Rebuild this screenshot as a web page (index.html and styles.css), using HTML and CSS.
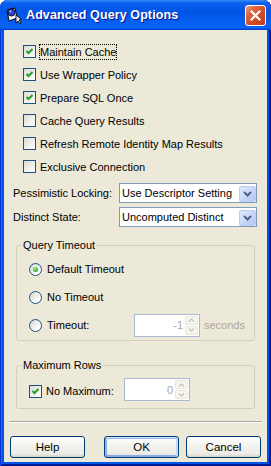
FILE: index.html
```html
<!DOCTYPE html>
<html lang="en">
<head>
    <meta charset="UTF-8">
    <meta name="viewport" content="width=device-width, initial-scale=1.0">
    <title>Advanced Query Options</title>
    <link rel="stylesheet" href="styles.css">
</head>
<body>
    <div class="window">
        <div class="titlebar">
            <svg class="app-icon" width="17" height="17" viewBox="0 0 17 17">
                <path d="M2 3 L10 1 L12 11 L4 14 Z" fill="#fff" stroke="#000" stroke-width="1"/>
                <circle cx="6.5" cy="5.5" r="3.6" fill="#2a3fd8" stroke="#000" stroke-width="0.8"/>
                <circle cx="5.4" cy="4.4" r="1.1" fill="#9fb4ff"/>
                <path d="M11 8 L11 16 L13 14 L15 17 L16 16 L14 13 L16.5 12.5 Z" fill="#fff" stroke="#000" stroke-width="0.9"/>
            </svg>
            <span class="title">Advanced Query Options</span>
            <button class="close">
                <svg width="11" height="11" viewBox="0 0 11 11">
                    <path d="M1.5 1.5 L9.5 9.5 M9.5 1.5 L1.5 9.5" stroke="#fff" stroke-width="2.2" stroke-linecap="square"/>
                </svg>
            </button>
        </div>

        <div class="client">
            <div class="checks">
                <label class="check-row">
                    <span class="cb checked"><svg width="11" height="11" viewBox="0 0 11 11"><path d="M2.5 5 L4.5 7 L8.5 3" fill="none" stroke="#21a121" stroke-width="2"/></svg></span>
                    <span class="text focus">Maintain Cache</span>
                </label>
                <label class="check-row">
                    <span class="cb checked"><svg width="11" height="11" viewBox="0 0 11 11"><path d="M2.5 5 L4.5 7 L8.5 3" fill="none" stroke="#21a121" stroke-width="2"/></svg></span>
                    <span class="text">Use Wrapper Policy</span>
                </label>
                <label class="check-row">
                    <span class="cb checked"><svg width="11" height="11" viewBox="0 0 11 11"><path d="M2.5 5 L4.5 7 L8.5 3" fill="none" stroke="#21a121" stroke-width="2"/></svg></span>
                    <span class="text">Prepare SQL Once</span>
                </label>
                <label class="check-row">
                    <span class="cb"></span>
                    <span class="text">Cache Query Results</span>
                </label>
                <label class="check-row">
                    <span class="cb"></span>
                    <span class="text">Refresh Remote Identity Map Results</span>
                </label>
                <label class="check-row">
                    <span class="cb"></span>
                    <span class="text">Exclusive Connection</span>
                </label>
            </div>

            <div class="field-row first">
                <span class="field-label">Pessimistic Locking:</span>
                <div class="combo">
                    <span class="combo-value">Use Descriptor Setting</span>
                    <span class="drop"><svg width="9" height="6" viewBox="0 0 9 6"><path d="M1 1 L4.5 4.5 L8 1" fill="none" stroke="#4d6185" stroke-width="2"/></svg></span>
                </div>
            </div>
            <div class="field-row">
                <span class="field-label">Distinct State:</span>
                <div class="combo">
                    <span class="combo-value">Uncomputed Distinct</span>
                    <span class="drop"><svg width="9" height="6" viewBox="0 0 9 6"><path d="M1 1 L4.5 4.5 L8 1" fill="none" stroke="#4d6185" stroke-width="2"/></svg></span>
                </div>
            </div>

            <div class="group timeout">
                <span class="legend">Query Timeout</span>
                <label class="radio-row">
                    <span class="radio selected"></span>
                    <span class="text">Default Timeout</span>
                </label>
                <label class="radio-row">
                    <span class="radio"></span>
                    <span class="text">No Timeout</span>
                </label>
                <div class="radio-row">
                    <span class="radio"></span>
                    <span class="text timeout-label">Timeout:</span>
                    <div class="spinner">
                        <span class="spin-value">-1</span>
                        <span class="spin-buttons">
                            <span class="spin-btn"><svg width="7" height="4" viewBox="0 0 7 4"><path d="M1 3.5 L3.5 1 L6 3.5" fill="none" stroke="#c9c7ba" stroke-width="1.4"/></svg></span>
                            <span class="spin-btn"><svg width="7" height="4" viewBox="0 0 7 4"><path d="M1 0.5 L3.5 3 L6 0.5" fill="none" stroke="#c9c7ba" stroke-width="1.4"/></svg></span>
                        </span>
                    </div>
                    <span class="disabled-text">seconds</span>
                </div>
            </div>

            <div class="group maxrows">
                <span class="legend">Maximum Rows</span>
                <div class="nomax-row">
                    <label class="nomax-check">
                        <span class="cb checked"><svg width="11" height="11" viewBox="0 0 11 11"><path d="M2.5 5 L4.5 7 L8.5 3" fill="none" stroke="#21a121" stroke-width="2"/></svg></span>
                        <span class="text nomax-label">No Maximum:</span>
                    </label>
                    <div class="spinner">
                        <span class="spin-value">0</span>
                        <span class="spin-buttons">
                            <span class="spin-btn"><svg width="7" height="4" viewBox="0 0 7 4"><path d="M1 3.5 L3.5 1 L6 3.5" fill="none" stroke="#c9c7ba" stroke-width="1.4"/></svg></span>
                            <span class="spin-btn"><svg width="7" height="4" viewBox="0 0 7 4"><path d="M1 0.5 L3.5 3 L6 0.5" fill="none" stroke="#c9c7ba" stroke-width="1.4"/></svg></span>
                        </span>
                    </div>
                </div>
            </div>

            <div class="separator"></div>

            <div class="buttons">
                <button class="btn help">Help</button>
                <button class="btn default">OK</button>
                <button class="btn">Cancel</button>
            </div>
        </div>
    </div>
</body>
</html>
```

FILE: styles.css
```css
body {
    margin: 0;
    background: #fff;
    font-family: "Liberation Sans", Arial, sans-serif;
    font-size: 11px;
    color: #000;
}
.window {
    width: 271px;
    height: 466px;
    display: flex;
    flex-direction: column;
    background: #0055e5;
    border-radius: 8px 8px 0 0;
    overflow: hidden;
    box-shadow: inset 1px 0 #0831d9, inset -1px 0 #00138c, inset 0 -1px #00138c, inset 2px 0 #166aee, inset -2px 0 #001ea0, inset 0 -2px #001ea0;
}
.titlebar {
    height: 30px;
    flex-shrink: 0;
    display: flex;
    align-items: center;
    padding: 0 5px 0 5px;
    background: linear-gradient(180deg, #3b8cf6, #0a5fef 10%, #0055e5 40%, #0862f5 85%, #0a63f7 92%, #0048d5 97%, #003dd7);
}
.app-icon {
    flex-shrink: 0;
    margin-top: 1px;
}
.title {
    margin-left: 4px;
    flex: 1;
    color: #fff;
    font-weight: bold;
    font-size: 12.5px;
    letter-spacing: 0.1px;
    text-shadow: 1px 1px #0f1089;
}
.close {
    width: 21px;
    height: 21px;
    padding: 0;
    display: flex;
    align-items: center;
    justify-content: center;
    border: 1px solid #fff;
    border-radius: 3px;
    background: linear-gradient(135deg, #f0a080 0%, #e06a45 25%, #d24a25 60%, #c23a18 100%);
}
.client {
    flex: 1;
    margin: 0 4px 4px;
    background: #ece9d8;
}
.checks {
    padding: 10px 0 0 19px;
}
.check-row {
    display: flex;
    align-items: center;
    gap: 3px;
    height: 23px;
    white-space: nowrap;
}
.text {
    padding: 1px;
    line-height: 14px;
    white-space: nowrap;
}
.focus {
    outline: 1px dotted #000;
    outline-offset: -1px;
}
.cb {
    width: 11px;
    height: 11px;
    flex-shrink: 0;
    border: 1px solid #1c5180;
    background: linear-gradient(135deg, #dcdcd7, #ffffff);
    display: flex;
}
.field-row {
    display: flex;
    align-items: center;
    height: 20px;
    padding-left: 9px;
    margin-top: 4px;
}
.field-row.first {
    margin-top: 5px;
}
.field-label {
    width: 106px;
}
.combo {
    width: 136px;
    height: 18px;
    border: 1px solid #7f9db9;
    background: #fff;
    display: flex;
    align-items: center;
}
.combo-value {
    flex: 1;
    padding-left: 2px;
    white-space: nowrap;
    overflow: hidden;
}
.drop {
    width: 15px;
    height: 14px;
    flex-shrink: 0;
    margin: 1px 0 0 0;
    border: 1px solid #bccdf3;
    border-radius: 2px;
    background: linear-gradient(135deg, #e1eafe, #c2d4fa 60%, #b4c8f6);
    display: flex;
    align-items: center;
    justify-content: center;
}
.group {
    position: relative;
    margin: 0 12px;
    border: 1px solid #d0d0bf;
    border-radius: 3px;
}
.legend {
    position: absolute;
    top: -8px;
    left: 5px;
    padding: 0 1px;
    background: #ece9d8;
    line-height: 14px;
}
.timeout {
    margin-top: 18px;
    padding: 9px 0 1px 12px;
}
.radio-row {
    display: flex;
    align-items: center;
    gap: 4px;
    height: 28px;
}
.radio {
    width: 11px;
    height: 11px;
    flex-shrink: 0;
    border: 1px solid #1c5180;
    border-radius: 50%;
    background: linear-gradient(135deg, #d6d6ce, #ffffff 80%);
    display: flex;
    align-items: center;
    justify-content: center;
}
.radio.selected::after {
    content: "";
    width: 5px;
    height: 5px;
    border-radius: 50%;
    background: radial-gradient(circle at 40% 35%, #a4f5a4, #3cbc3c 55%, #1a8f1a);
}
.timeout-label {
    width: 82px;
}
.spinner {
    width: 64px;
    height: 21px;
    border: 1px solid #a8b9d1;
    background: #fff;
    display: flex;
    align-items: center;
}
.spin-value {
    flex: 1;
    text-align: right;
    padding-right: 2px;
    color: #aca899;
}
.spin-buttons {
    width: 13px;
    height: 19px;
    margin-right: 1px;
    display: flex;
    flex-direction: column;
    gap: 1px;
}
.spin-btn {
    flex: 1;
    border: 1px solid #e8e6dd;
    border-radius: 2px;
    background: #f6f5ee;
    display: flex;
    align-items: center;
    justify-content: center;
}
.disabled-text {
    color: #aca899;
}
.maxrows {
    margin-top: 24px;
    padding: 12px 0 7px 12px;
}
.nomax-row {
    display: flex;
    align-items: flex-end;
    height: 23px;
}
.nomax-check {
    display: flex;
    align-items: center;
    gap: 3px;
    margin-bottom: 2px;
}
.nomax-label {
    width: 77px;
}
.separator {
    margin: 12px 5px 0;
    border-top: 1px solid #aca899;
    border-bottom: 1px solid #fff;
}
.buttons {
    display: flex;
    padding-left: 6px;
    margin-top: 13px;
    gap: 7px;
}
.btn {
    width: 75px;
    height: 22px;
    padding: 0;
    font-family: "Liberation Sans", Arial, sans-serif;
    font-size: 11.5px;
    color: #000;
    border: 1px solid #003c74;
    border-radius: 3px;
    background: linear-gradient(180deg, #ffffff, #f4f4f0 40%, #ecebe6 85%, #d6d0c5);
}
.btn.help {
    margin-right: 12px;
}
.btn.default {
    box-shadow: inset -1px 1px #cee7ff, inset 1px 2px #98b8ea, inset -2px 0 #bcd4f6, inset 1px -1px #89ade4, inset 2px -2px #89ade4;
}
```
